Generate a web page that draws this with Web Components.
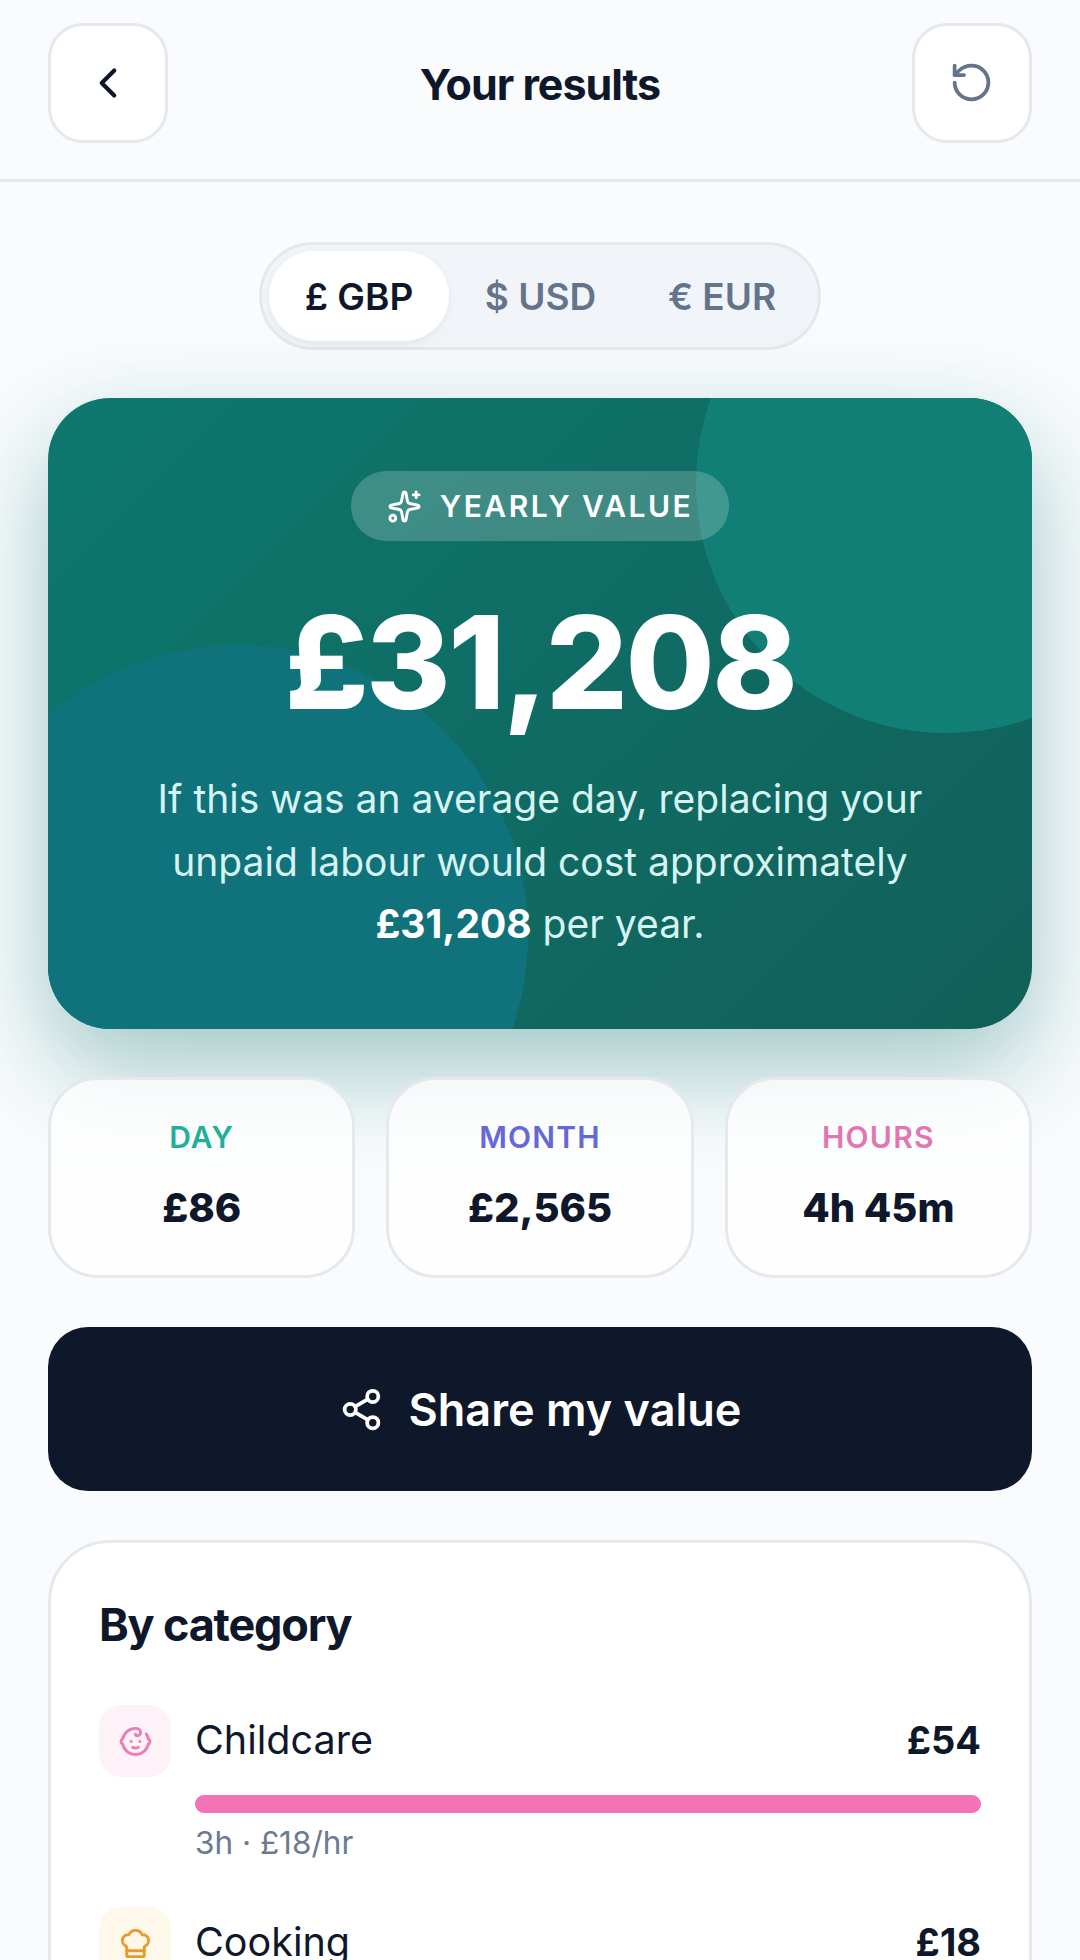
<!DOCTYPE html>
<html lang="en">
<head>
<meta charset="utf-8">
<title>Your results</title>
<style>
	html, body{ margin: 0; height: 1960px; overflow: hidden; background: #f9fbfd; }
	body{ font-family: Inter, "Liberation Sans", sans-serif; color: #0f172a; }
</style>
</head>
<body>

<results-page>
	<top-bar title="Your results"></top-bar>
	<currency-toggle></currency-toggle>
	<value-card amount="£31,208">
		If this was an average day, replacing your unpaid labour would cost approximately <b>£31,208</b> per year.
	</value-card>
	<stat-row>
		<stat-tile label="Day" value="£86" color="#1fb09b"></stat-tile>
		<stat-tile label="Month" value="£2,565" color="#6468d8"></stat-tile>
		<stat-tile label="Hours" value="4h 45m" color="#e077b1"></stat-tile>
	</stat-row>
	<share-button>Share my value</share-button>
	<category-card heading="By category">
		<category-row icon="baby" name="Childcare" amount="£54" note="3h · £18/hr" tint="#fdf2f8" color="#e97fb6" bar="#f472b6" fill="100"></category-row>
		<category-row icon="chef" name="Cooking" amount="£18" note="1h · £18/hr" tint="#fdf8ea" color="#e99b2a" bar="#f59e0b" fill="33"></category-row>
	</category-card>
</results-page>

<script>
const ICONS = {
	back: '<path d="m15 18-6-6 6-6"/>',
	reset: '<path d="M3 12a9 9 0 1 0 9-9 9.75 9.75 0 0 0-6.74 2.74L3 8"/><path d="M3 3v5h5"/>',
	sparkles: '<path d="M11.017 2.814a1 1 0 0 1 1.966 0l1.051 5.558a2 2 0 0 0 1.594 1.594l5.558 1.051a1 1 0 0 1 0 1.966l-5.558 1.051a2 2 0 0 0-1.594 1.594l-1.051 5.558a1 1 0 0 1-1.966 0l-1.051-5.558a2 2 0 0 0-1.594-1.594l-5.558-1.051a1 1 0 0 1 0-1.966l5.558-1.051a2 2 0 0 0 1.594-1.594z"/><path d="M20 2v4"/><path d="M22 4h-4"/><circle cx="4" cy="20" r="2"/>',
	share: '<circle cx="18" cy="5" r="3"/><circle cx="6" cy="12" r="3"/><circle cx="18" cy="19" r="3"/><line x1="8.59" x2="15.42" y1="13.51" y2="17.49"/><line x1="15.41" x2="8.59" y1="6.51" y2="10.49"/>',
	baby: '<path d="M10 16c.5.3 1.2.5 2 .5s1.5-.2 2-.5"/><path d="M15 12h.01"/><path d="M19.38 6.813A9 9 0 0 1 20.8 10.2a2 2 0 0 1 0 3.6 9 9 0 0 1-17.6 0 2 2 0 0 1 0-3.6A9 9 0 0 1 12 3c2 0 3.5 1.1 3.5 2.5s-.9 2.5-2 2.5c-.8 0-1.5-.4-1.5-1"/><path d="M9 12h.01"/>',
	chef: '<path d="M17 21a1 1 0 0 0 1-1v-5.35c0-.457.316-.844.727-1.041a4 4 0 0 0-2.134-7.589 5 5 0 0 0-9.186 0 4 4 0 0 0-2.134 7.588c.411.198.727.585.727 1.041V20a1 1 0 0 0 1 1Z"/><path d="M6 17h12"/>'
}

const icon = (name, size, width = 2) => `<svg width="${size}" height="${size}" viewBox="0 0 24 24" fill="none" stroke="currentColor" stroke-width="${width}" stroke-linecap="round" stroke-linejoin="round">${ICONS[name]}</svg>`

class Base extends HTMLElement {

	constructor(){

		super()

		this.shadow = this.attachShadow({mode: 'open'})

	}

	connectedCallback(){

		this.render()

	}

}

class ResultsPage extends Base {

	render(){

		this.shadow.innerHTML = `
		<style>
			:host{
				display: block;
				height: 1960px;
				overflow: hidden;
			}
			main{
				display: flex;
				flex-direction: column;
				align-items: stretch;
			}
		</style>
		<main><slot></slot></main>
	`

	}

}

class TopBar extends Base {

	render(){

		this.shadow.innerHTML = `
		<style>
			:host{
				display: flex;
				align-items: center;
				justify-content: space-between;
				height: 179px;
				padding: 0 48px;
				border-bottom: 3px solid #e5e9ee;
				box-sizing: content-box;
			}
			button{
				display: flex;
				align-items: center;
				justify-content: center;
				width: 120px;
				height: 120px;
				padding: 0;
				margin-top: -14px;
				background: #fff;
				border: 3px solid #e5e9ee;
				border-radius: 35px;
				box-sizing: border-box;
			}
			.back{ color: #0f172a; }
			.reset{ color: #64748b; }
			h1{
				margin: -12px 0 0;
				font-size: 43px;
				font-weight: 700;
				letter-spacing: -1px;
				color: #0f172a;
			}
		</style>
		<button class="back">${icon('back', 50)}</button>
		<h1>${this.getAttribute('title')}</h1>
		<button class="reset">${icon('reset', 45)}</button>
	`

	}

}

class CurrencyToggle extends Base {

	render(){

		this.shadow.innerHTML = `
		<style>
			:host{
				display: flex;
				justify-content: center;
				margin-top: 60px;
			}
			div{
				display: flex;
				gap: 1.5px;
				padding: 6px 6px 6px 7px;
				background: #f1f5f9;
				border: 3px solid #e5e9ee;
				border-radius: 60px;
			}
			span{
				display: flex;
				align-items: center;
				justify-content: center;
				width: 180px;
				height: 90px;
				font-size: 37px;
				font-weight: 600;
				color: #64748b;
				border-radius: 45px;
				white-space: pre;
			}
			span.on{
				color: #0f172a;
				background: #fff;
				box-shadow: 0 3px 8px rgba(15,23,42,.06);
			}
		</style>
		<div>
			<span class="on">£ GBP</span>
			<span>$ USD</span>
			<span>€ EUR</span>
		</div>
	`

	}

}

class ValueCard extends Base {

	render(){

		this.shadow.innerHTML = `
		<style>
			:host{
				display: block;
				position: relative;
				margin: 48px 48px 0;
				height: 631px;
				border-radius: 62px;
				box-shadow: 0 40px 100px rgba(15,118,110,.38);
			}
			.clip{
				position: absolute;
				inset: 0;
				overflow: hidden;
				border-radius: 62px;
				background: linear-gradient(135deg, #0d786e, #11605a);
			}
			.clip i{
				position: absolute;
				border-radius: 50%;
			}
			.a{
				width: 500px;
				height: 500px;
				top: -165px;
				right: -164px;
				background: #117f76;
			}
			.b{
				width: 580px;
				height: 580px;
				left: -100px;
				bottom: -196px;
				background: #10737c;
			}
			.body{
				position: relative;
				display: flex;
				flex-direction: column;
				align-items: center;
				padding-top: 73px;
				color: #fff;
			}
			.tag{
				display: flex;
				align-items: center;
				gap: 18px;
				height: 70px;
				padding: 0 36px;
				border-radius: 35px;
				background: rgba(255,255,255,.2);
				font-size: 30px;
				font-weight: 600;
				letter-spacing: 2.5px;
			}
			.amount{
				margin-top: 41px;
				font-size: 129px;
				line-height: 160px;
				font-weight: 800;
				letter-spacing: -2.5px;
			}
			p{
				margin: 26px 0 0;
				width: 850px;
				text-align: center;
				font-size: 39px;
				line-height: 62.5px;
				color: #d6f3f1;
			}
			::slotted(b){
				font-weight: 700;
				color: #fff;
			}
		</style>
		<div class="clip"><i class="a"></i><i class="b"></i></div>
		<div class="body">
			<div class="tag">${icon('sparkles', 35)}<span>YEARLY VALUE</span></div>
			<div class="amount">${this.getAttribute('amount')}</div>
			<p><slot></slot></p>
		</div>
	`

	}

}

class StatRow extends Base {

	render(){

		this.shadow.innerHTML = `
		<style>
			:host{
				display: grid;
				grid-template-columns: repeat(3, 1fr);
				gap: 31px;
				margin: 48px 48px 0;
				position: relative;
			}
		</style>
		<slot></slot>
	`

	}

}

class StatTile extends Base {

	render(){

		this.shadow.innerHTML = `
		<style>
			:host{
				display: flex;
				flex-direction: column;
				align-items: center;
				height: 201px;
				box-sizing: border-box;
				padding-top: 37px;
				background: rgba(255,255,255,.74);
				border: 3px solid #e5e9ee;
				border-radius: 50px;
			}
			.label{
				font-size: 30px;
				line-height: 40px;
				font-weight: 600;
				letter-spacing: 1.2px;
				text-transform: uppercase;
				color: ${this.getAttribute('color')};
			}
			.value{
				margin-top: 23px;
				font-size: 40px;
				line-height: 56px;
				font-weight: 800;
				color: #0f172a;
			}
		</style>
		<div class="label">${this.getAttribute('label')}</div>
		<div class="value">${this.getAttribute('value')}</div>
	`

	}

}

class ShareButton extends Base {

	render(){

		this.shadow.innerHTML = `
		<style>
			:host{
				display: flex;
				align-items: center;
				justify-content: center;
				gap: 25px;
				position: relative;
				height: 164px;
				margin: 49px 48px 0;
				background: #0f172a;
				border-radius: 40px;
				color: #fff;
				font-size: 45px;
				font-weight: 600;
			}
		</style>
		${icon('share', 45)}
		<span><slot></slot></span>
	`

	}

}

class CategoryCard extends Base {

	render(){

		this.shadow.innerHTML = `
		<style>
			:host{
				display: block;
				position: relative;
				margin: 49px 48px 0;
				padding: 0 48px;
				background: #fff;
				border: 3px solid #e5e9ee;
				border-radius: 62px;
				height: 600px;
			}
			h2{
				margin: 0;
				padding-top: 54px;
				font-size: 45px;
				line-height: 56px;
				font-weight: 700;
				letter-spacing: -1.2px;
				color: #0f172a;
			}
			.rows{
				display: flex;
				flex-direction: column;
				gap: 42px;
				margin-top: 52px;
			}
		</style>
		<h2>${this.getAttribute('heading')}</h2>
		<div class="rows"><slot></slot></div>
	`

	}

}

class CategoryRow extends Base {

	render(){

		const color = this.getAttribute('color')

		this.shadow.innerHTML = `
		<style>
			:host{
				display: flex;
				gap: 24px;
			}
			.tile{
				flex: none;
				display: flex;
				align-items: center;
				justify-content: center;
				width: 72px;
				height: 72px;
				border-radius: 22px;
				background: ${this.getAttribute('tint')};
				color: ${color};
			}
			.main{
				flex: 1;
			}
			.top{
				display: flex;
				justify-content: space-between;
				font-size: 39.5px;
				line-height: 70px;
				color: #0f172a;
			}
			.top b{
				font-size: 38px;
				font-weight: 700;
			}
			.bar{
				height: 18px;
				margin-top: 20px;
				border-radius: 9px;
				background: #f1f5f9;
			}
			.bar i{
				display: block;
				height: 100%;
				width: ${this.getAttribute('fill')}%;
				border-radius: 9px;
				background: ${this.getAttribute('bar')};
			}
			.note{
				margin-top: 8px;
				font-size: 31.5px;
				line-height: 44px;
				color: #6b7a8f;
			}
		</style>
		<div class="tile">${icon(this.getAttribute('icon'), 35)}</div>
		<div class="main">
			<div class="top"><span>${this.getAttribute('name')}</span><b>${this.getAttribute('amount')}</b></div>
			<div class="bar"><i></i></div>
			<div class="note">${this.getAttribute('note')}</div>
		</div>
	`

	}

}

customElements.define('results-page', ResultsPage)
customElements.define('top-bar', TopBar)
customElements.define('currency-toggle', CurrencyToggle)
customElements.define('value-card', ValueCard)
customElements.define('stat-row', StatRow)
customElements.define('stat-tile', StatTile)
customElements.define('share-button', ShareButton)
customElements.define('category-card', CategoryCard)
customElements.define('category-row', CategoryRow)
</script>
</body>
</html>
